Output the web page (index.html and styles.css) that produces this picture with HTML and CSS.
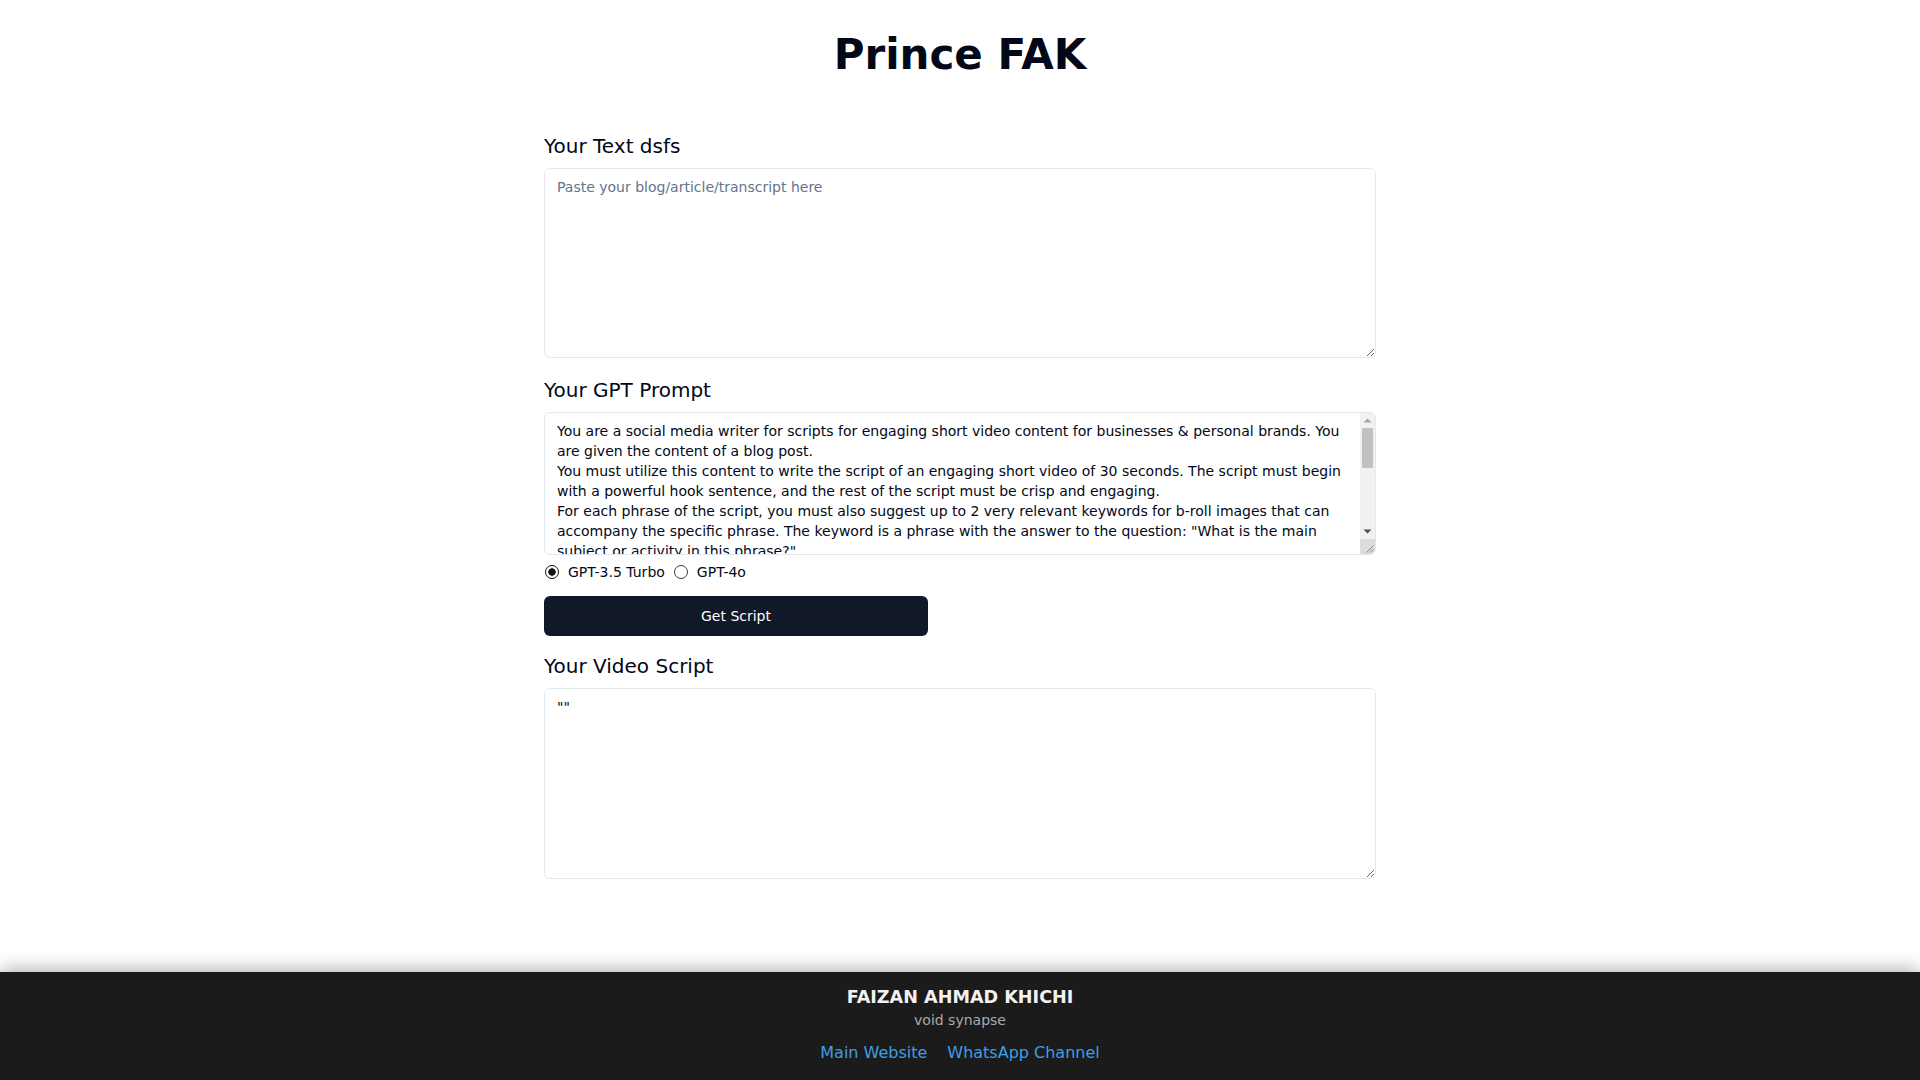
FILE: index.html
```html
<!DOCTYPE html>
<html lang="en">
<head>
<meta charset="utf-8">
<title>Prince FAK</title>
<link rel="stylesheet" href="styles.css">
</head>
<body>
<main class="page">
  <h1 class="title">Prince FAK</h1>

  <section class="field field-first">
    <label class="label" for="src">Your Text dsfs</label>
    <textarea id="src" class="box box-tall" placeholder="Paste your blog/article/transcript here"></textarea>
  </section>

  <section class="field field-next">
    <label class="label" for="prompt">Your GPT Prompt</label>
    <div class="prompt-wrap">
      <textarea id="prompt" class="box box-prompt">You are a social media writer for scripts for engaging short video content for businesses &amp; personal brands. You are given the content of a blog post.
You must utilize this content to write the script of an engaging short video of 30 seconds. The script must begin with a powerful hook sentence, and the rest of the script must be crisp and engaging.
For each phrase of the script, you must also suggest up to 2 very relevant keywords for b-roll images that can accompany the specific phrase. The keyword is a phrase with the answer to the question: "What is the main subject or activity in this phrase?"
The keywords must be short, concrete and easy to search for in a stock footage library.
Respond only in the following format:
Phrase 1: [text of the phrase]
Keywords: [keyword 1], [keyword 2]
Phrase 2: [text of the phrase]
Keywords: [keyword 1], [keyword 2]
...
Do not add any other comments, headings or explanations to your answer.</textarea>
      <div class="fake-scroll" aria-hidden="true">
        <span class="sb-btn">
          <svg width="15" height="15" viewBox="0 0 15 15"><polygon points="3.5,9.5 11.5,9.5 7.5,5.5" fill="#a3a3a3"/></svg>
        </span>
        <span class="sb-track"><span class="sb-thumb"></span></span>
        <span class="sb-btn">
          <svg width="15" height="15" viewBox="0 0 15 15"><polygon points="3.5,5.5 11.5,5.5 7.5,9.5" fill="#505050"/></svg>
        </span>
        <span class="sb-corner">
          <svg width="15" height="15" viewBox="0 0 15 15"><path d="M13.5 6.5 L6.5 13.5 M13.5 10 L10 13.5" stroke="#8a8a8a" stroke-width="1" fill="none"/></svg>
        </span>
      </div>
    </div>
  </section>

  <div class="models">
    <label class="model"><input type="radio" name="model" class="radio" checked><span>GPT-3.5 Turbo</span></label>
    <label class="model"><input type="radio" name="model" class="radio"><span>GPT-4o</span></label>
  </div>

  <button class="btn" type="button">Get Script</button>

  <section class="field field-last">
    <label class="label" for="out">Your Video Script</label>
    <textarea id="out" class="box box-output">""</textarea>
  </section>
</main>

<footer class="footer">
  <div class="footer-name">FAIZAN AHMAD KHICHI</div>
  <div class="footer-tag">void synapse</div>
  <nav class="footer-links">
    <a href="#" class="footer-link">Main Website</a>
    <a href="#" class="footer-link">WhatsApp Channel</a>
  </nav>
</footer>
</body>
</html>
```
FILE: styles.css
```css
html, body {
  margin: 0;
  padding: 0;
}

body {
  min-height: 100vh;
  display: flex;
  flex-direction: column;
  background: #ffffff;
  font-family: "DejaVu Sans", sans-serif;
  color: #020817;
}

.page {
  flex: 1;
  width: 832px;
  margin: 0 auto;
  padding-top: 31px;
}

.title {
  margin: 0;
  font-size: 42px;
  line-height: 48px;
  font-weight: 700;
  text-align: center;
  color: #020817;
}

.field-first {
  margin-top: 53px;
}

.field-next {
  margin-top: 18px;
}

.field-last {
  margin-top: 16px;
}

.label {
  display: block;
  font-size: 20px;
  line-height: 28px;
  margin-bottom: 8px;
  color: #020817;
}

.box {
  display: block;
  box-sizing: border-box;
  width: 100%;
  margin: 0;
  padding: 8px 12px;
  border: 1px solid #e2e8f0;
  border-radius: 6px;
  background: #ffffff;
  font-family: "DejaVu Sans", sans-serif;
  font-size: 14px;
  line-height: 20px;
  color: #020817;
  outline: none;
}

.box::placeholder {
  color: #64748b;
}

.box-tall {
  height: 190px;
}

.box-output {
  height: 191px;
}

.prompt-wrap {
  position: relative;
}

.box-prompt {
  height: 143px;
  padding-right: 27px;
  overflow: hidden;
}

.fake-scroll {
  position: absolute;
  top: 1px;
  right: 1px;
  bottom: 1px;
  width: 15px;
  display: flex;
  flex-direction: column;
  background: #f1f1f1;
  border-radius: 0 5px 5px 0;
  overflow: hidden;
}

.sb-btn,
.sb-corner {
  display: block;
  width: 15px;
  height: 15px;
  flex: none;
}

.sb-btn svg,
.sb-corner svg {
  display: block;
}

.sb-track {
  display: block;
  flex: 1;
}

.sb-thumb {
  display: block;
  height: 40px;
  margin: 0 2px;
  background: #c1c1c1;
}

.sb-corner {
  background: #dcdcdc;
}

.models {
  display: flex;
  align-items: center;
  gap: 8px;
  margin-top: 7px;
  height: 20px;
  font-size: 14px;
  line-height: 20px;
}

.model {
  display: flex;
  align-items: center;
}

.radio {
  appearance: none;
  -webkit-appearance: none;
  box-sizing: border-box;
  width: 14px;
  height: 14px;
  margin: 0 9px 0 1px;
  border: 1px solid #3a3a3a;
  border-radius: 50%;
  background: #ffffff;
}

.radio:checked {
  border: 1.5px solid #111111;
  background: radial-gradient(circle, #111111 0 3.4px, #ffffff 4px);
}

.btn {
  display: block;
  width: 384px;
  height: 40px;
  margin-top: 14px;
  padding: 0 16px;
  border: none;
  border-radius: 6px;
  background: #111827;
  color: #ffffff;
  font-family: "DejaVu Sans", sans-serif;
  font-size: 14px;
  line-height: 20px;
}

.footer {
  background: #1b1b1b;
  box-shadow: 0 -4px 16px rgba(0, 0, 0, 0.28);
  padding: 13px 0 15px;
  text-align: center;
}

.footer-name {
  font-size: 17.6px;
  line-height: 24px;
  font-weight: 700;
  color: #f2f2f2;
}

.footer-tag {
  margin-top: 1px;
  font-size: 14px;
  line-height: 20px;
  color: #a9a9a9;
}

.footer-links {
  display: flex;
  justify-content: center;
  gap: 20px;
  margin-top: 11px;
  font-size: 16px;
  line-height: 24px;
}

.footer-link {
  color: #3d9fe6;
  text-decoration: none;
}
```
